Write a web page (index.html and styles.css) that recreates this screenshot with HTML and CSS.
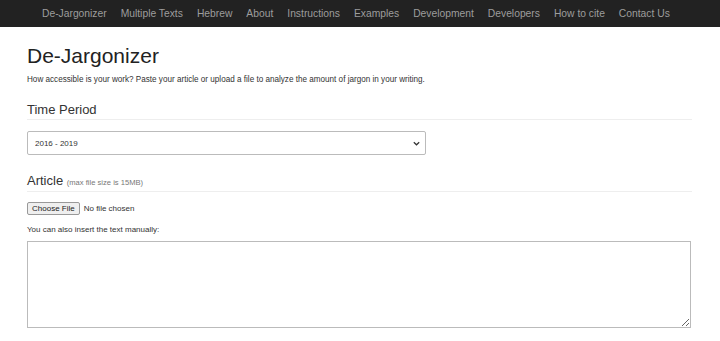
FILE: index.html
```html
<!DOCTYPE html>
<html lang="en">
<head>
<meta charset="utf-8">
<title>De-Jargonizer</title>
<link rel="stylesheet" href="styles.css">
</head>
<body>
<nav class="navbar">
  <ul class="nav">
    <li><a href="#">De-Jargonizer</a></li>
    <li><a href="#">Multiple Texts</a></li>
    <li><a href="#">Hebrew</a></li>
    <li><a href="#">About</a></li>
    <li><a href="#">Instructions</a></li>
    <li><a href="#">Examples</a></li>
    <li><a href="#">Development</a></li>
    <li><a href="#">Developers</a></li>
    <li><a href="#">How to cite</a></li>
    <li><a href="#">Contact Us</a></li>
  </ul>
</nav>
<main class="container">
  <h1 class="title">De-Jargonizer</h1>
  <p class="lead">How accessible is your work? Paste your article or upload a file to analyze the amount of jargon in your writing.</p>

  <h3 class="section">Time Period</h3>
  <div class="select-wrap">
    <select class="period">
      <option>2016 - 2019</option>
    </select>
    <svg class="chevron" width="7" height="5" viewBox="0 0 7 5" aria-hidden="true">
      <path d="M0.8 1.2 L3.5 3.8 L6.2 1.2" fill="none" stroke="#333" stroke-width="1.2"/>
    </svg>
  </div>

  <h3 class="section section-article">Article <small class="note">(max file size is 15MB)</small></h3>
  <input class="file" type="file">
  <p class="hint">You can also insert the text manually:</p>
  <textarea class="text"></textarea>
</main>
</body>
</html>
```

FILE: styles.css
```css
* { box-sizing: border-box; }
body {
  margin: 0;
  background: #fff;
  color: #333;
  font-family: "Liberation Sans", Arial, sans-serif;
  font-size: 8px;
}
.navbar {
  height: 27px;
  background: #222;
  display: flex;
  align-items: center;
}
.nav {
  list-style: none;
  margin: 0;
  padding: 0 0 0 35px;
  display: flex;
}
.nav a {
  display: block;
  padding: 0 7px;
  color: #9d9d9d;
  text-decoration: none;
  font-size: 10.3px;
  line-height: 27px;
}
.container {
  padding: 0 28px 0 27px;
}
.title {
  margin: 17px 0 0;
  font-size: 21px;
  line-height: 23px;
  font-weight: normal;
  color: #222;
}
.lead {
  margin: 7px 0 0;
  line-height: 11.5px;
  font-size: 8.15px;
  color: #333;
}
.section {
  margin: 17px 0 0;
  font-size: 13px;
  line-height: 14.5px;
  font-weight: normal;
  color: #333;
  padding-bottom: 2px;
  border-bottom: 1px solid #eee;
}
.section-article {
  margin-top: 19px;
  padding-bottom: 0;
}
.note {
  font-size: 7.6px;
  color: #777;
}
.select-wrap {
  position: relative;
  margin-top: 11px;
  width: 399px;
}
.period {
  display: block;
  width: 100%;
  height: 24px;
  padding: 0 7px;
  font-family: "Liberation Sans", Arial, sans-serif;
  font-size: 8px;
  color: #333;
  background: #fff;
  border: 1px solid #bbb;
  border-radius: 2px;
  appearance: none;
  -webkit-appearance: none;
}
.chevron {
  position: absolute;
  right: 6px;
  top: 10px;
  pointer-events: none;
}
.file {
  display: block;
  margin-top: 10px;
  font-family: "Liberation Sans", Arial, sans-serif;
  font-size: 8px;
  color: #333;
}
.file::file-selector-button {
  font-family: "Liberation Sans", Arial, sans-serif;
  font-size: 8px;
  padding: 1px 4px;
  margin-right: 4px;
  background: #efefef;
  border: 1px solid #999;
  border-radius: 2px;
  color: #222;
}
.hint {
  margin: 9px 0 0;
  font-size: 8px;
  line-height: 11px;
}
.text {
  display: block;
  margin-top: 6px;
  width: 664px;
  height: 87px;
  border: 1px solid #bbb;
  border-radius: 0;
  resize: vertical;
}
```
